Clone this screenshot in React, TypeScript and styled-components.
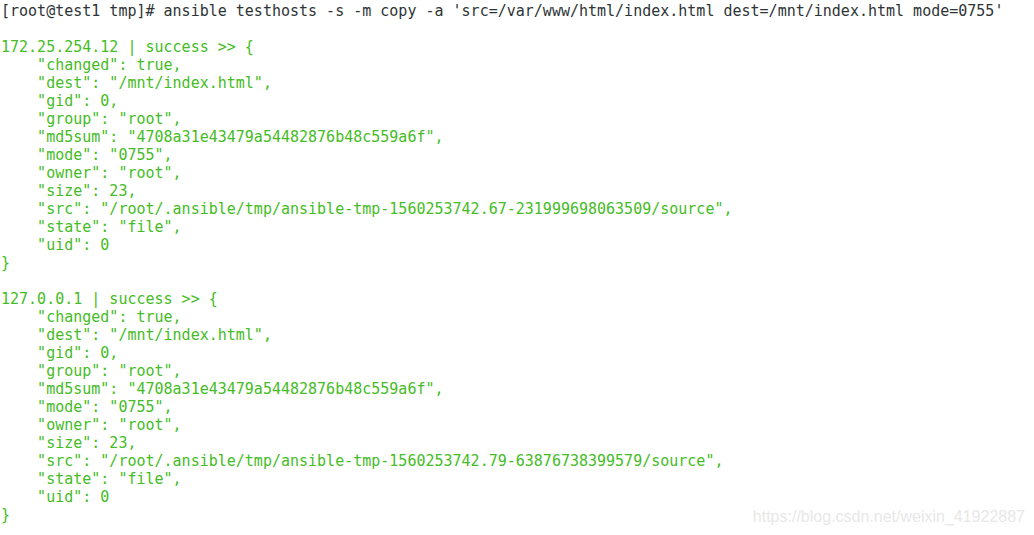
import React from "react";
import styled, { createGlobalStyle } from "styled-components";

const Global = createGlobalStyle`
  html, body { margin: 0; padding: 0; background: #ffffff; }
  body { width: 1034px; height: 535px; overflow: hidden; }
`;

const Terminal = styled.div`
  position: relative;
  width: 1034px;
  height: 535px;
  box-sizing: border-box;
  padding: 2px 0 0 1px;
  background: #ffffff;
  font-family: "DejaVu Sans Mono", monospace;
  font-size: 15px;
  line-height: 18px;
`;

const Line = styled.div<{ $tone: "cmd" | "ok" }>`
  white-space: pre;
  height: 18px;
  color: ${(p) => (p.$tone === "cmd" ? "#2e3436" : "#45bc26")};
`;

const Watermark = styled.div`
  position: absolute;
  right: 9px;
  bottom: 9px;
  font-family: "Liberation Sans", Arial, sans-serif;
  font-size: 16px;
  color: #e8e8e8;
  white-space: nowrap;
`;

const block = (host: string, src: string) => [
  `${host} | success >> {`,
  `    "changed": true,`,
  `    "dest": "/mnt/index.html",`,
  `    "gid": 0,`,
  `    "group": "root",`,
  `    "md5sum": "4708a31e43479a54482876b48c559a6f",`,
  `    "mode": "0755",`,
  `    "owner": "root",`,
  `    "size": 23,`,
  `    "src": "${src}",`,
  `    "state": "file",`,
  `    "uid": 0`,
  `}`,
];

const lines: string[] = [
  ...block("172.25.254.12", "/root/.ansible/tmp/ansible-tmp-1560253742.67-231999698063509/source"),
  "",
  ...block("127.0.0.1", "/root/.ansible/tmp/ansible-tmp-1560253742.79-63876738399579/source"),
];

export default function App() {
  return (
    <>
      <Global />
      <Terminal>
        <Line $tone="cmd">
          {"[root@test1 tmp]# ansible testhosts -s -m copy -a 'src=/var/www/html/index.html dest=/mnt/index.html mode=0755'"}
        </Line>
        <Line $tone="cmd">{" "}</Line>
        {lines.map((l, i) => (
          <Line key={i} $tone="ok">
            {l || " "}
          </Line>
        ))}
        <Watermark>https://blog.csdn.net/weixin_41922887</Watermark>
      </Terminal>
    </>
  );
}
